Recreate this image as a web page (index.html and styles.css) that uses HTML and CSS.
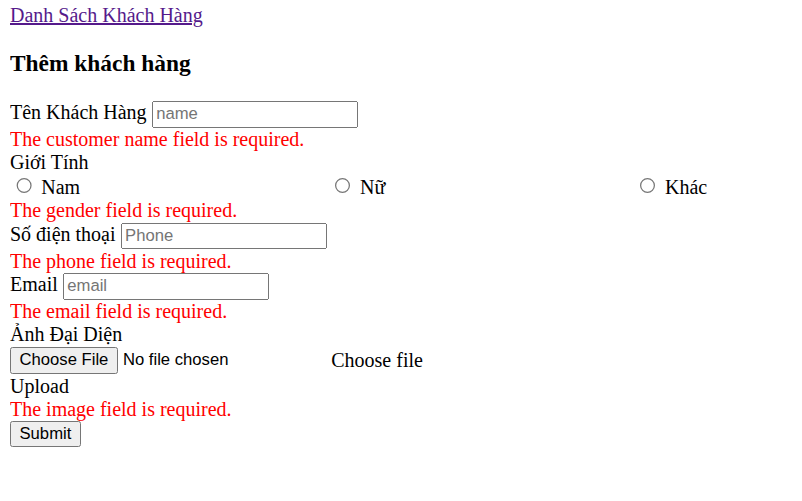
FILE: index.html
```html
<!DOCTYPE html>
<html lang="vi">
<head>
<meta charset="utf-8">
<title>Thêm khách hàng</title>
<link rel="stylesheet" href="styles.css">
</head>
<body class="page">
<a class="back-link" href="#">Danh Sách Khách Hàng</a>
<h3 class="title">Thêm khách hàng</h3>
<form class="form">
  <div class="field"><label class="label">Tên Khách Hàng</label> <input class="text-input" type="text" placeholder="name"></div>
  <div class="error">The customer name field is required.</div>
  <div class="label-row">Giới Tính</div>
  <div class="radio-row">
    <label class="radio-opt"><input class="radio" type="radio" name="gender"> Nam</label>
    <label class="radio-opt"><input class="radio" type="radio" name="gender"> Nữ</label>
    <label class="radio-opt"><input class="radio" type="radio" name="gender"> Khác</label>
  </div>
  <div class="error">The gender field is required.</div>
  <div class="field"><label class="label">Số điện thoại</label> <input class="text-input" type="text" placeholder="Phone"></div>
  <div class="error">The phone field is required.</div>
  <div class="field"><label class="label">Email</label> <input class="text-input" type="text" placeholder="email"></div>
  <div class="error">The email field is required.</div>
  <div class="label-row">Ảnh Đại Diện</div>
  <div class="file-row">
    <input class="file-input" type="file">
    <label class="file-label">Choose file</label>
  </div>
  <div class="label-row">Upload</div>
  <div class="error">The image field is required.</div>
  <button class="submit" type="submit">Submit</button>
</form>
</body>
</html>
```

FILE: styles.css
```css
html {
  zoom: 1.25;
}
.page {
  margin: 3px 8px 8px;
  font-family: "Liberation Serif", "Times New Roman", serif;
  font-size: 16px;
  color: #000;
  background: #fff;
}
.back-link {
  color: #551a8b;
  text-decoration: underline;
}
.title {
  font-size: 1.17em;
  font-weight: bold;
  margin: 1em 0;
}
.form {
  margin: 0;
}
.field {
  padding: 0.4px 0;
}
.text-input {
  font-family: "Liberation Sans", Arial, sans-serif;
  font-size: 13.333px;
  width: 165px;
  box-sizing: border-box;
}
.error {
  color: #ff0000;
}
.radio-row {
  display: grid;
  grid-template-columns: 255px 244px auto;
}
.radio {
  margin: 3px 3px 0 5px;
}
.file-row {
  display: grid;
  grid-template-columns: 257px auto;
  align-items: center;
  padding: 0.8px 0;
}
.file-input {
  font-family: "Liberation Sans", Arial, sans-serif;
  font-size: 13.333px;
}
.submit {
  font-family: "Liberation Sans", Arial, sans-serif;
  font-size: 13.333px;
}
```
